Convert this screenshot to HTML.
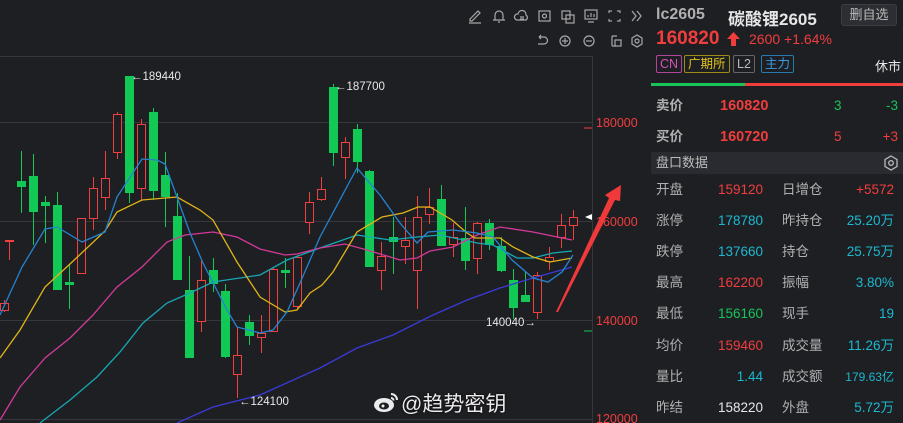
<!DOCTYPE html>
<html><head><meta charset="utf-8"><style>
*{margin:0;padding:0;box-sizing:border-box}
body{width:903px;height:423px;background:#1e1f23;overflow:hidden;position:relative;font-family:"Liberation Sans","Noto Sans CJK SC",sans-serif;color:#ccc}
.p{position:absolute;white-space:nowrap}
.r{color:#f23d3d}.g{color:#17c45a}.c{color:#1cb8d0}.w{color:#e6e6e6}.gr{color:#b0b0b0}
.row{position:absolute;left:656px;width:240px;height:20px;font-size:13.5px;line-height:20px}
.row span{position:absolute;top:0;line-height:20px;height:20px}
.tag{position:absolute;top:55px;height:18px;border:1px solid;border-radius:2px;font-size:12.5px;line-height:16px;padding:0 3px}
</style></head><body>
<svg class="p" style="left:0;top:0" width="650" height="423" viewBox="0 0 650 423">
<g stroke="#36373c" stroke-width="1">
<line x1="0" y1="56.5" x2="592" y2="56.5"/>
<line x1="0" y1="122.5" x2="592" y2="122.5"/>
<line x1="0" y1="221.5" x2="592" y2="221.5"/>
<line x1="0" y1="320.5" x2="592" y2="320.5"/>
<line x1="0" y1="419.5" x2="592" y2="419.5"/>
<line x1="592.5" y1="56" x2="592.5" y2="423"/>
<line x1="650.5" y1="0" x2="650.5" y2="423"/>
</g>
<line x1="584" y1="128" x2="592" y2="128" stroke="#f23d3d"/>
<line x1="584" y1="331" x2="592" y2="331" stroke="#17c45a"/>
<g id="candles"></g>
<g fill="none" stroke-width="1.3">
<polyline stroke="#3a3ad8" points="177,423 213,407 260,395 300,377 320,368 357,348 393,335 433,315 467,300 500,288 533,278 572,267"/>
<polyline stroke="#16a8b5" points="40,423 70,400 97,377 120,352 143,323 167,303 190,293 213,282 260,275 287,260 320,248 357,235 390,240 417,237 440,235 477,243 493,245 517,258 533,258 553,253 572,251"/>
<polyline stroke="#d23a9a" points="0,420 20,387 45,358 70,338 93,315 117,287 142,267 167,242 185,235 213,232 237,237 260,249 285,255 297,254 320,248 345,244 367,250 400,260 417,258 430,251 453,247 477,235 500,227 533,232 572,240"/>
<polyline stroke="#e0b416" points="0,358 20,330 45,287 70,264 105,231 117,212 142,200 177,197 200,210 213,220 237,262 260,297 285,312 297,310 310,293 322,285 333,272 357,232 382,217 403,213 418,207 430,207 452,220 467,233 475,238 500,238 513,247 533,257 550,262 572,258"/>
<polyline stroke="#2584d0" points="0,315 22,267 45,229 57,227 82,242 105,232 117,197 142,159 157,160 165,164 190,233 203,263 227,310 237,327 260,333 273,330 287,312 300,283 320,237 357,168 380,195 400,223 417,243 428,232 453,230 477,233 493,237 512,260 533,278 548,282 562,272 573,255"/>
</g>
<g fill="#e8e8e8" font-size="11.5" font-family="Liberation Sans,sans-serif">
<text x="131" y="80">←189440</text>
<text x="335" y="90">←187700</text>
<text x="239" y="405">←124100</text>
<text x="486" y="326">140040→</text>
</g>
<g fill="#f23d3d" font-size="12.5" font-family="Liberation Sans,sans-serif">
<text x="596" y="127">180000</text>
<text x="596" y="226">160000</text>
<text x="596" y="325">140000</text>
<text x="596" y="423">120000</text>
</g>
<polygon points="585,217 592,214 592,220" fill="#fff"/>
<polygon points="556,312 609,198 605,195 621,185 620,201 615,200 558,312" fill="#f0393a"/>
</svg>
<script>
var d=[[0,303,310,300,312,'r'],[5,240,241,240,260,'r'],[17,181,187,151,213,'g'],[29,176,212,154,245,'g'],[41,202,206,196,243,'g'],[53,205,290,192,290,'g'],[65,282,285,265,309,'g'],[77,218,273,218,273,'r'],[89,188,218,177,230,'r'],[101,178,197,151,210,'r'],[113,114,152,112,159,'r'],[125,76,193,76,203,'g'],[137,124,188,119,200,'r'],[149,112,191,108,200,'g'],[161,175,197,152,227,'g'],[173,216,280,193,280,'g'],[185,290,358,256,358,'g'],[197,280,321,260,332,'r'],[209,270,284,258,292,'g'],[221,291,357,284,358,'g'],[233,355,374,327,398,'r'],[245,322,336,315,345,'g'],[257,333,337,315,353,'r'],[269,269,331,268,331,'r'],[281,270,273,258,288,'g'],[293,257,306,255,310,'r'],[305,202,222,192,234,'r'],[317,189,199,177,201,'r'],[329,87,153,84,166,'g'],[341,142,157,137,179,'r'],[353,129,162,124,173,'g'],[365,171,267,170,267,'g'],[377,256,270,242,290,'r'],[389,237,242,217,274,'g'],[401,240,246,217,264,'r'],[413,217,270,196,309,'r'],[425,207,214,188,224,'r'],[437,199,246,185,246,'g'],[449,237,244,223,257,'r'],[461,238,261,207,270,'g'],[473,223,258,222,274,'r'],[485,223,245,219,250,'g'],[497,246,271,237,272,'g'],[509,280,308,269,319,'g'],[521,295,302,272,302,'g'],[533,275,312,272,319,'r'],[545,257,261,247,270,'r'],[557,225,237,214,248,'r'],[569,217,225,210,240,'r']];
var s='';d.forEach(function(c){var x=c[0],col=c[5]=='r'?'#f0403f':'#12c956';
s+='<line x1="'+(x+4.5)+'" y1="'+c[3]+'" x2="'+(x+4.5)+'" y2="'+c[4]+'" stroke="'+col+'"/>';
if(c[5]=='r')s+='<rect x="'+(x+0.5)+'" y="'+(c[1]+0.5)+'" width="8" height="'+Math.max(1,c[2]-c[1])+'" fill="#1e1f23" stroke="'+col+'"/>';
else s+='<rect x="'+x+'" y="'+c[1]+'" width="9" height="'+Math.max(2,c[2]-c[1])+'" fill="'+col+'"/>';});
document.getElementById('candles').innerHTML=s;
</script>
<svg class="p" style="left:464px;top:5px" width="180" height="45" viewBox="0 0 180 45" fill="none" stroke="#a8a8a8" stroke-width="1.2">
<path d="M6 14 L14 6 L16 8 L8 16 L6 16 Z M5 18 H17"/>
<path d="M31 15 V10 a4 4 0 0 1 8 0 V15 H29 H41 M34 17 h2"/>
<path d="M53 15 a3 3 0 0 1 1-6 a4 4 0 0 1 8 1 a3 3 0 0 1 0 5 Z M56 12 h4 M56 14 h4"/>
<rect x="75" y="6" width="11" height="10"/><circle cx="80.5" cy="11" r="2"/>
<rect x="98" y="6" width="8" height="8"/><rect x="102" y="10" width="8" height="8"/>
<rect x="121" y="5" width="12" height="9"/><path d="M124 17 h6 M124 12 v-2 M127 12 v-4 M130 12 v-3"/>
<path d="M145 8 v-2 h3 M153 6 h3 v2 M156 14 v2 h-3 M148 16 h-3 v-2"/>
<path d="M168 6 l4 5 l-4 5 M173 6 l4 5 l-4 5"/>
<path d="M75 32 h5 a3.5 3.5 0 0 1 0 7 h-6 M75 32 l2-2 M75 32 l2 2"/>
<circle cx="101" cy="36" r="5"/><path d="M98 36 h6 M101 33 v6"/>
<circle cx="125" cy="36" r="5"/><path d="M122 36 h6"/>
<path d="M148 31 v10 M148 31 h5 M152 41 h-4"/><rect x="151" y="35" width="6" height="6"/>
<path d="M173 30 l5 3 v6 l-5 3 l-5-3 v-6 Z"/><circle cx="173" cy="36" r="2"/>
</svg>
<div class="p" style="left:373px;top:388px;font-size:21px;color:#ececec;text-shadow:0 0 2px #000">
<svg width="28" height="24" viewBox="0 0 28 24" style="vertical-align:-3px"><ellipse cx="11" cy="15" rx="10" ry="7" fill="#ececec"/><ellipse cx="11" cy="16" rx="5" ry="3.5" fill="#1e1f23"/><circle cx="10" cy="16" r="1.5" fill="#ececec"/><path d="M18 4 a6 6 0 0 1 6 6 M18 8 a2.5 2.5 0 0 1 2.5 2.5" stroke="#ececec" stroke-width="2" fill="none"/></svg>@趋势密钥</div>

<div class="p gr" style="left:656px;top:6px;font-size:16px;font-weight:bold">lc2605</div>
<div class="p w" style="left:728px;top:5px;font-size:17px;font-weight:bold">碳酸锂2605</div>
<div class="p" style="left:841px;top:4px;width:56px;height:22px;background:#2d2e33;border:1px solid #3c3d42;border-radius:3px;font-size:13px;color:#bbb;text-align:center;line-height:20px">删自选</div>
<div class="p r" style="left:656px;top:28px;font-size:19px;font-weight:bold">160820</div>
<svg class="p" style="left:727px;top:32px" width="13" height="14"><path d="M6.5 0 L13 7 H9 V14 H4 V7 H0 Z" fill="#f23d3d"/></svg>
<div class="p r" style="left:749px;top:31px;font-size:14px">2600 +1.64%</div>
<div class="tag" style="left:656px;border-color:#b3449a;color:#d452b8">CN</div>
<div class="tag" style="left:684px;border-color:#a08a18;color:#e1c21a">广期所</div>
<div class="tag" style="left:733px;border-color:#666;color:#bbb">L2</div>
<div class="tag" style="left:761px;border-color:#2a78b0;color:#3a9be0">主力</div>
<div class="p w" style="left:875px;top:56px;font-size:13px">休市</div>
<div class="p" style="left:651px;top:83px;width:94px;height:3px;background:#17c45a"></div>
<div class="p" style="left:745px;top:83px;width:158px;height:3px;background:#f23d3d"></div>
<div class="row" style="top:96px;font-weight:bold"><span class="gr" style="left:0">卖价</span><span class="r" style="left:64px;font-size:14.5px">160820</span><span class="g" style="left:178px;font-weight:normal">3</span><span class="g" style="right:-2px;font-weight:normal">-3</span></div>
<div class="row" style="top:127px;font-weight:bold"><span class="gr" style="left:0">买价</span><span class="r" style="left:64px;font-size:14.5px">160720</span><span class="r" style="left:178px;font-weight:normal">5</span><span class="r" style="right:-2px;font-weight:normal">+3</span></div>
<div class="p" style="left:651px;top:152px;width:252px;height:22px;background:#2a2b30;font-size:13px;color:#bbb;padding-left:5px;line-height:22px">盘口数据
<svg style="position:absolute;right:4px;top:3px" width="16" height="16" viewBox="0 0 16 16" fill="none" stroke="#bbb" stroke-width="1.3"><path d="M8 1 l6 3.5 v7 l-6 3.5 l-6-3.5 v-7 Z"/><circle cx="8" cy="8" r="2.3"/></svg></div>
<div class="row" style="top:180px"><span class="gr">开盘</span><span class="r" style="right:133px">159120</span><span class="gr" style="left:126px">日增仓</span><span class="r" style="right:2px">+5572</span></div>
<div class="row" style="top:211px"><span class="gr">涨停</span><span class="c" style="right:133px">178780</span><span class="gr" style="left:126px">昨持仓</span><span class="c" style="right:2px">25.20万</span></div>
<div class="row" style="top:242px"><span class="gr">跌停</span><span class="c" style="right:133px">137660</span><span class="gr" style="left:126px">持仓</span><span class="c" style="right:2px">25.75万</span></div>
<div class="row" style="top:273px"><span class="gr">最高</span><span class="r" style="right:133px">162200</span><span class="gr" style="left:126px">振幅</span><span class="c" style="right:2px">3.80%</span></div>
<div class="row" style="top:304px"><span class="gr">最低</span><span class="g" style="right:133px">156160</span><span class="gr" style="left:126px">现手</span><span class="c" style="right:2px">19</span></div>
<div class="row" style="top:336px"><span class="gr">均价</span><span class="r" style="right:133px">159460</span><span class="gr" style="left:126px">成交量</span><span class="c" style="right:2px">11.26万</span></div>
<div class="row" style="top:367px"><span class="gr">量比</span><span class="c" style="right:133px">1.44</span><span class="gr" style="left:126px">成交额</span><span class="c" style="right:2px;font-size:12px">179.63亿</span></div>
<div class="row" style="top:398px"><span class="gr">昨结</span><span class="w" style="right:133px">158220</span><span class="gr" style="left:126px">外盘</span><span class="c" style="right:2px">5.72万</span></div>
</body></html>
